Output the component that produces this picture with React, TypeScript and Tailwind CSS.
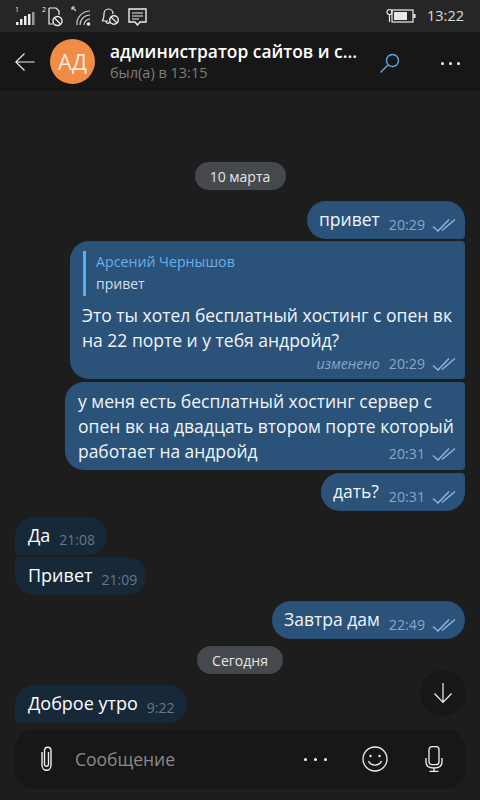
import React from "react";

const Checks = ({ c = "#8ab2dc" }: { c?: string }) => (
  <svg width="24" height="14" viewBox="0 0 24 14" fill="none" stroke={c} strokeWidth="1.6" className="shrink-0">
    <path d="M1 8.5 L6 13 L17 1.5" />
    <path d="M10 12.5 L23 1.5" />
  </svg>
);

const Out = ({ children, time, w, mt, corners }: any) => (
  <div className={`self-end ${w} h-[38px] ${mt} mr-[15px] bg-[#2b5278] ${corners} flex items-start pl-[12px] pr-[9px] text-[#f1f5f9]`}>
    {children}
    <div className="ml-auto flex items-center gap-[7px] pt-[14px] text-[14.2px] leading-[20px] text-[#86a8cb]">
      <span>{time}</span>
      <Checks />
    </div>
  </div>
);

const In = ({ text, time, w, mt, corners }: any) => (
  <div className={`self-start ${w} ${mt} ml-[15px] h-[38px] bg-[#172839] ${corners} flex items-start pl-[13px] text-white`}>
    <span className="text-[18px] leading-[24px] pt-[6px]">{text}</span>
    <span className="ml-[9px] pt-[13px] text-[14px] leading-[20px] text-[#66788a]">{time}</span>
  </div>
);

const DatePill = ({ text, w, mt }: any) => (
  <div className={`self-center ${w} ${mt} h-[28px] rounded-[14px] bg-[#45494d] flex items-center justify-center text-[14px] text-[#e6e6e6]`}>{text}</div>
);

export default function App() {
  return (
    <div className="relative w-[480px] h-[800px] overflow-hidden bg-[#1d1d1d] flex flex-col" style={{ fontFamily: '"Open Sans", "Noto Sans", sans-serif' }}>
      {/* status bar */}
      <div className="h-[32px] shrink-0 bg-[#262626] flex items-center pl-[15px] pr-[16px] text-[#e8e8e8]">
        <svg width="20" height="20" viewBox="0 0 20 20" fill="#eee">
          <text x="0" y="6" fontSize="7" fill="#eee">1</text>
          <rect x="1" y="16" width="2.5" height="3" /><rect x="5" y="13" width="2.5" height="6" /><rect x="9" y="10" width="2.5" height="9" />
          <rect x="13" y="8" width="2.5" height="11" /><rect x="17" y="6" width="2.5" height="13" fill="#999" />
        </svg>
        <svg width="22" height="22" viewBox="0 0 22 22" fill="none" stroke="#eee" strokeWidth="1.2" className="ml-[7px]">
          <text x="0" y="7" fontSize="7" fill="#eee" stroke="none">2</text>
          <path d="M7 3 H14 L17 6 V10 M7 3 V19 H11" />
          <circle cx="15.5" cy="16" r="4.5" strokeWidth="1.4" /><path d="M12.5 13 L18.5 19" />
        </svg>
        <svg width="22" height="22" viewBox="0 0 22 22" fill="none" stroke="#ccc" strokeWidth="1.2" className="ml-[7px]">
          <path d="M1 2 L5 6 M1 2 H4 M1 2 V5" />
          <path d="M6 20 A13 13 0 0 1 19 6 M9 20 A10 10 0 0 1 19 10 M13 20 A6 6 0 0 1 19 14" />
          <circle cx="17.5" cy="19" r="1.8" fill="#eee" stroke="none" />
        </svg>
        <svg width="20" height="20" viewBox="0 0 20 20" fill="none" stroke="#eee" strokeWidth="1.2" className="ml-[7px]">
          <path d="M2 15 C4 13 4 11 4 8 C4 5 6 3 8.5 3 C11 3 13 5 13 8 M2 15 H8 M6 15 C6 18 9 18 9.5 16" />
          <circle cx="14" cy="14" r="4.3" strokeWidth="1.4" /><path d="M11 11 L17 17" />
        </svg>
        <svg width="20" height="20" viewBox="0 0 20 20" fill="none" stroke="#eee" strokeWidth="1.4" className="ml-[7px]">
          <path d="M2 3 H19 V16 H13 L10.5 19 L8 16 H2 Z" />
          <path d="M5 7 H16 M5 10 H16 M5 13 H12" strokeWidth="1.1" />
        </svg>
        <div className="ml-auto flex items-center gap-[11px]">
          <svg width="30" height="16" viewBox="0 0 30 16" fill="none" stroke="#eee" strokeWidth="1.2">
            <circle cx="3.5" cy="4" r="2.5" /><path d="M3.5 6.5 V14" />
            <rect x="6" y="2" width="21" height="12" />
            <rect x="8" y="4" width="13" height="8" fill="#e8e8e8" stroke="none" />
            <rect x="27.5" y="6" width="2" height="4" fill="#eee" stroke="none" />
          </svg>
          <span className="text-[14.5px] leading-[20px] text-[#ddd]">13:22</span>
        </div>
      </div>

      {/* header */}
      <div className="h-[59px] shrink-0 bg-[#171717] flex items-center pl-[15px] text-white">
        <svg width="20" height="18" viewBox="0 0 20 18" fill="none" stroke="#f0f0f0" strokeWidth="1.2">
          <path d="M0.5 9 H19.5 M9.5 0.5 L0.8 9 L9.5 17.5" />
        </svg>
        <div className="ml-[15px] w-[45px] h-[45px] rounded-full bg-[#f08c46] flex items-center justify-center text-[22px] text-[#fbe9dc]">АД</div>
        <div className="ml-[15px] w-[250px] -mt-[3px]">
          <div className="text-[17.4px] leading-[24px] font-semibold whitespace-nowrap">администратор сайтов и с...</div>
          <div className="text-[14.5px] leading-[18px] mt-px text-[#7f7f7f]">был(а) в 13:15</div>
        </div>
        <svg width="20" height="20" viewBox="0 0 20 20" fill="none" stroke="#5fa8e6" strokeWidth="1.4" className="ml-[20px] mt-[3px]">
          <circle cx="12.5" cy="7.5" r="6" /><path d="M8 12 L0.5 19.5" />
        </svg>
        <div className="ml-[41px] flex gap-[5px] mt-[3px]">
          <i className="w-[3px] h-[3px] rounded-full bg-white" /><i className="w-[3px] h-[3px] rounded-full bg-white" /><i className="w-[3px] h-[3px] rounded-full bg-white" />
        </div>
      </div>

      {/* messages */}
      <div className="flex-1 flex flex-col">
        <DatePill text="10 марта" w="w-[91px]" mt="mt-[71px]" />
        <Out w="w-[158px]" mt="mt-[11px]" time="20:29" corners="rounded-l-[19px] rounded-tr-[19px] rounded-br-[4px]">
          <span className="text-[17.5px] leading-[24px] pt-[6px]">привет</span>
        </Out>
        <div className="self-end mt-[2px] mr-[15px] w-[395px] h-[138px] bg-[#2b5278] rounded-l-[19px] rounded-r-[4px] pl-[12px] pr-[9px] pt-[10px] text-[#f1f5f9]">
          <div className="flex h-[45px] gap-[10px] ml-px">
            <div className="w-[3px] bg-[#5aaef0]" />
            <div className="-mt-[2px]">
              <div className="text-[14.2px] leading-[26px] text-[#6ab0ec]">Арсений Чернышов</div>
              <div className="text-[14px] leading-[18px] text-[#d5dfe9]">привет</div>
            </div>
          </div>
          <div className="mt-[7px] text-[17.5px] leading-[25px] whitespace-nowrap">Это ты хотел бесплатный хостинг с опен вк<br />на 22 порте и у тебя андройд?</div>
          <div className="flex items-center justify-end gap-[7px] text-[14.2px] leading-[20px] text-[#86a8cb] mt-px">
            <i className="mr-[2px]">изменено</i><span>20:29</span><Checks />
          </div>
        </div>
        <div className="self-end mt-[3px] mr-[15px] w-[400px] h-[88px] bg-[#2b5278] rounded-l-[19px] rounded-r-[4px] pl-[13px] pr-[9px] pt-[7px] text-[#f1f5f9]">
          <div className="text-[17.55px] leading-[25px] whitespace-nowrap">у меня есть бесплатный хостинг сервер с<br />опен вк на двадцать втором порте который</div>
          <div className="flex items-center">
            <span className="text-[17.4px] leading-[25px]">работает на андройд</span>
            <div className="ml-auto flex items-center gap-[7px] text-[14.2px] leading-[20px] text-[#86a8cb] pt-[4px]"><span>20:31</span><Checks /></div>
          </div>
        </div>
        <Out w="w-[144px]" mt="mt-[3px]" time="20:31" corners="rounded-l-[19px] rounded-br-[19px] rounded-tr-[4px]">
          <span className="text-[17.5px] leading-[24px] pt-[6px]">дать?</span>
        </Out>
        <In text="Да" time="21:08" w="w-[92px]" mt="mt-[6px]" corners="rounded-t-[19px] rounded-br-[19px] rounded-bl-[4px]" />
        <In text="Привет" time="21:09" w="w-[131px]" mt="mt-[2px]" corners="rounded-b-[19px] rounded-tr-[19px] rounded-tl-[4px]" />
        <Out w="w-[193px]" mt="mt-[6px]" time="22:49" corners="rounded-[19px]">
          <span className="text-[17.5px] leading-[24px] pt-[6px]">Завтра дам</span>
        </Out>
        <DatePill text="Сегодня" w="w-[86px]" mt="mt-[7px]" />
        <In text="Доброе утро" time="9:22" w="w-[172px]" mt="mt-[11px]" corners="rounded-t-[19px] rounded-br-[19px] rounded-bl-[4px]" />
        <div className="self-start mt-[6px] ml-[15px] w-[120px] h-[38px] bg-[#172839] rounded-[19px]" />
      </div>

      {/* scroll down */}
      <div className="absolute left-[420px] top-[670px] w-[46px] h-[46px] rounded-full bg-[#171717] flex items-center justify-center">
        <svg width="20" height="22" viewBox="0 0 20 22" fill="none" stroke="#f0f0f0" strokeWidth="1.2">
          <path d="M10 1 V20 M1.5 11.5 L10 20.5 L18.5 11.5" />
        </svg>
      </div>

      {/* input */}
      <div className="absolute left-[15px] top-[729px] w-[450px] h-[60px] rounded-[20px] bg-[#171717] flex items-center text-white">
        <svg width="16" height="26" viewBox="0 0 16 26" fill="none" stroke="#eee" strokeWidth="1.4" className="ml-[23px]">
          <path d="M4 6 V19 C4 26 13 26 13 19 V5 C13 0 6.5 0 6.5 5 V18 C6.5 21 10.5 21 10.5 18 V6" />
        </svg>
        <span className="ml-[21px] w-[101px] text-[17.5px] whitespace-nowrap text-[#8a8a8a]">Сообщение</span>
        <div className="ml-[128px] flex gap-[7px]">
          <i className="w-[3px] h-[3px] rounded-full bg-white" /><i className="w-[3px] h-[3px] rounded-full bg-white" /><i className="w-[3px] h-[3px] rounded-full bg-white" />
        </div>
        <svg width="26" height="26" viewBox="0 0 26 26" fill="none" stroke="#f0f0f0" strokeWidth="1.3" className="ml-[35px]">
          <circle cx="13" cy="13" r="12" />
          <circle cx="8.5" cy="10" r="1.2" fill="#f0f0f0" stroke="none" /><circle cx="17.5" cy="10" r="1.2" fill="#f0f0f0" stroke="none" />
          <path d="M6.5 15 C9 20.5 17 20.5 19.5 15" />
        </svg>
        <svg width="18" height="26" viewBox="0 0 18 26" fill="none" stroke="#f0f0f0" strokeWidth="1.3" className="ml-[37px]">
          <rect x="4" y="0.7" width="10" height="18" rx="3" />
          <path d="M1 12 V16 C1 20 4 22 9 22 C14 22 17 20 17 16 V12 M9 22 V25 M4.5 25.3 H13.5" />
        </svg>
      </div>
    </div>
  );
}
